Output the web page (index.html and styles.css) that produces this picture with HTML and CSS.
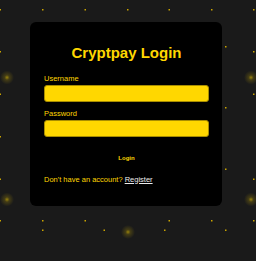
FILE: index.html
```html
<!DOCTYPE html>
<html lang="en">
<head>
    <meta charset="UTF-8">
    <title>Cryptpay Login</title>
    <link rel="stylesheet" href="styles.css">
</head>
<body>
    <!-- background particles -->
    <svg class="particles" width="256" height="261" viewBox="0 0 256 261">
        <defs>
            <radialGradient id="glow">
                <stop offset="0" stop-color="#ffd700" stop-opacity="0.55"/>
                <stop offset="0.35" stop-color="#ffd700" stop-opacity="0.18"/>
                <stop offset="1" stop-color="#ffd700" stop-opacity="0"/>
            </radialGradient>
        </defs>
        <g fill="#c9a400">
            <rect x="-0.5" y="9" width="1.5" height="1.5"/>
            <rect x="42" y="9" width="1.5" height="1.5"/>
            <rect x="84.5" y="9" width="1.5" height="1.5"/>
            <rect x="127" y="9" width="1.5" height="1.5"/>
            <rect x="168.5" y="9" width="1.5" height="1.5"/>
            <rect x="211" y="9" width="1.5" height="1.5"/>
            <rect x="253" y="9" width="1.5" height="1.5"/>
            <rect x="-0.5" y="51" width="1.5" height="1.5"/>
            <rect x="253" y="51" width="1.5" height="1.5"/>
            <rect x="-0.5" y="93.5" width="1.5" height="1.5"/>
            <rect x="253" y="93.5" width="1.5" height="1.5"/>
            <rect x="-0.5" y="136" width="1.5" height="1.5"/>
            <rect x="-0.5" y="178.5" width="1.5" height="1.5"/>
            <rect x="253" y="178.5" width="1.5" height="1.5"/>
            <rect x="-0.5" y="220" width="1.5" height="1.5"/>
            <rect x="42" y="220" width="1.5" height="1.5"/>
            <rect x="84.5" y="220" width="1.5" height="1.5"/>
            <rect x="168.5" y="220" width="1.5" height="1.5"/>
            <rect x="211" y="220" width="1.5" height="1.5"/>
            <rect x="253" y="220" width="1.5" height="1.5"/>
            <rect x="225" y="46" width="1.5" height="1.5"/>
            <rect x="225" y="107" width="1.5" height="1.5"/>
            <rect x="225" y="168.5" width="1.5" height="1.5"/>
            <rect x="225" y="229.5" width="1.5" height="1.5"/>
            <rect x="42" y="229.5" width="1.5" height="1.5"/>
            <rect x="103.5" y="229.5" width="1.5" height="1.5"/>
            <rect x="164" y="229.5" width="1.5" height="1.5"/>
        </g>
        <g fill="url(#glow)">
            <circle cx="7" cy="77.5" r="7"/>
            <circle cx="251" cy="77.5" r="7"/>
            <circle cx="7" cy="199.5" r="7"/>
            <circle cx="251" cy="199.5" r="7"/>
            <circle cx="128" cy="232" r="7"/>
        </g>
    </svg>

    <div class="login-card">
        <h1>Cryptpay Login</h1>
        <form class="login-form" onsubmit="return false">
            <div class="form-group">
                <label for="username">Username</label>
                <input type="text" id="username">
            </div>
            <div class="form-group">
                <label for="password">Password</label>
                <input type="password" id="password">
            </div>
            <button type="submit" class="login-btn">Login</button>
        </form>
        <p class="register">Don't have an account? <a href="#">Register</a></p>
    </div>
</body>
</html>
```

FILE: styles.css
```css
/* base */
* {
    box-sizing: border-box;
    margin: 0;
    padding: 0;
}

body {
    position: relative;
    min-height: 261px;
    background: #1a1a1a;
    font-family: "Liberation Sans", Arial, sans-serif;
    font-size: 7.5px;
    line-height: 9px;
    color: #ffd700;
    overflow: hidden;
}

/* background particles */
.particles {
    position: absolute;
    top: 0;
    left: 0;
    z-index: 0;
}

/* card */
.login-card {
    position: relative;
    z-index: 1;
    width: 192px;
    margin: 22px 0 0 30px;
    padding: 14px 13px 22px 14px;
    background: #000;
    border-radius: 6px;
}

h1 {
    margin: 8px 0 13px;
    font-size: 15px;
    line-height: 17px;
    font-weight: bold;
    text-align: center;
}

.form-group {
    margin-bottom: 6.5px;
}

.form-group label {
    display: block;
    margin-bottom: 2px;
}

.form-group input {
    display: block;
    width: 100%;
    height: 17px;
    background: #ffd700;
    border: 1px solid #a88d00;
    border-radius: 3px;
    outline: none;
}

.login-btn {
    display: block;
    width: 100%;
    height: 17px;
    margin-top: 13px;
    background: #000;
    border: none;
    color: #ffd700;
    font-family: "Liberation Sans", Arial, sans-serif;
    font-size: 6px;
    font-weight: bold;
    cursor: pointer;
}

.register {
    margin-top: 8px;
}

.register a {
    color: #ececec;
    text-decoration: underline;
}
```
